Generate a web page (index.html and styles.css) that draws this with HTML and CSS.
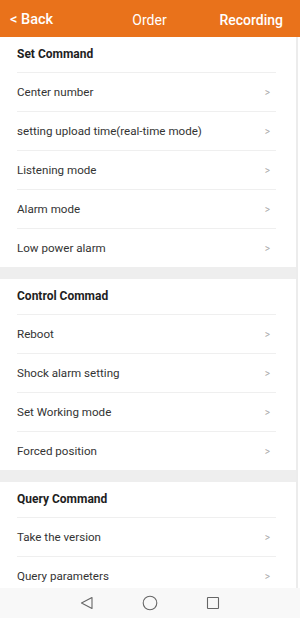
FILE: index.html
```html
<!DOCTYPE html>
<html>
<head>
    <title>Order</title>
    <meta charset="UTF-8">
    <link rel="stylesheet" href="styles.css">
</head>
<body>
    <div class="topbar">
        <span class="back">&lt; Back</span>
        <span class="title">Order</span>
        <span class="action">Recording</span>
    </div>

    <div class="page">
        <div class="section">
            <div class="section-title">Set Command</div>
            <div class="item"><span>Center number</span><span class="arrow">&gt;</span></div>
            <div class="item"><span>setting upload time(real-time mode)</span><span class="arrow">&gt;</span></div>
            <div class="item"><span>Listening mode</span><span class="arrow">&gt;</span></div>
            <div class="item"><span>Alarm mode</span><span class="arrow">&gt;</span></div>
            <div class="item"><span>Low power alarm</span><span class="arrow">&gt;</span></div>
        </div>
        <div class="gap"></div>
        <div class="section">
            <div class="section-title">Control Commad</div>
            <div class="item"><span>Reboot</span><span class="arrow">&gt;</span></div>
            <div class="item"><span>Shock alarm setting</span><span class="arrow">&gt;</span></div>
            <div class="item"><span>Set Working mode</span><span class="arrow">&gt;</span></div>
            <div class="item"><span>Forced position</span><span class="arrow">&gt;</span></div>
        </div>
        <div class="gap"></div>
        <div class="section">
            <div class="section-title">Query Command</div>
            <div class="item"><span>Take the version</span><span class="arrow">&gt;</span></div>
            <div class="item"><span>Query parameters</span><span class="arrow">&gt;</span></div>
        </div>
    </div>

    <div class="navbar">
        <svg width="14" height="14" viewBox="0 0 14 14"><path d="M12 1.5 L1.5 7 L12 12.5 Z" fill="none" stroke="#666" stroke-width="1.1" stroke-linejoin="round"/></svg>
        <svg width="16" height="16" viewBox="0 0 16 16"><circle cx="8" cy="8" r="6.8" fill="none" stroke="#666" stroke-width="1.1"/></svg>
        <svg width="14" height="14" viewBox="0 0 14 14"><rect x="1.5" y="1.5" width="11" height="11" rx="0.5" fill="none" stroke="#666" stroke-width="1.1"/></svg>
    </div>
</body>
</html>
```

FILE: styles.css
```css
body { margin: 0; font-family: Roboto, "Noto Sans", Arial, sans-serif; background: #fff; color: #333; }
.topbar { height: 37px; background: #e9721b; color: #fff; display: flex; align-items: center; justify-content: space-between; padding: 2px 17px 0 10px; box-sizing: border-box; font-size: 14px; }
.back { font-weight: 500; width: 70px; font-size: 14.5px; }
.title { font-weight: 400; padding-left: 6px; }
.action { font-weight: 500; width: 70px; text-align: right; }
.page { height: calc(100vh - 37px); overflow: hidden; border-right: 2px solid #ececec; margin-right: 2px; }
.section-title { height: 35px; line-height: 35px; margin: 0 20px 0 17px; border-bottom: 1px solid #efefef; font-size: 12px; font-weight: bold; color: #1e1e1e; }
.item { height: 38px; margin: 0 20px 0 17px; border-bottom: 1px solid #efefef; display: flex; align-items: center; justify-content: space-between; font-size: 11.6px; color: #333; }
.section .item:last-child { border-bottom: none; }
.arrow { color: #aaa; font-size: 10px; margin-right: 6px; }
.gap { height: 12px; background: #eeeeee; }
.navbar { position: fixed; left: 0; right: 0; bottom: 0; height: 30px; background: #f8f8f8; display: flex; align-items: center; justify-content: center; gap: 48px; }
```
